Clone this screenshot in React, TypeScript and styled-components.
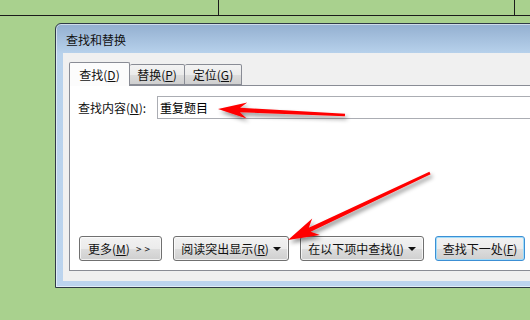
import styled, { createGlobalStyle } from "styled-components";

const GlobalStyle = createGlobalStyle`
  html, body {
    margin: 0;
    padding: 0;
    width: 530px;
    height: 320px;
    overflow: hidden;
    background: #a9d18e;
  }
  body {
    font-family: "Noto Sans CJK SC", "Noto Sans", sans-serif;
    font-size: 12px;
    color: #111;
  }
`;

type Pt = [number, number];

// arrow polygon, tail -> tip
const arrowPoints = (tail: Pt, tip: Pt, headLen: number, headW: number) => {
  const dx = tip[0] - tail[0];
  const dy = tip[1] - tail[1];
  const len = Math.hypot(dx, dy);
  const ux = dx / len;
  const uy = dy / len;
  const nx = -uy;
  const ny = ux;
  const at = (d: number, w: number): string =>
    `${(tip[0] - ux * d + nx * w).toFixed(1)},${(tip[1] - uy * d + ny * w).toFixed(1)}`;
  return [
    at(0, 0),
    at(headLen, headW),
    at(headLen - 7, 2.2),
    at(len, 1.3),
    at(len, -1.3),
    at(headLen - 7, -2.2),
    at(headLen, -headW),
  ].join(" ");
};

export default function App() {
  return (
    <>
      <GlobalStyle />
      <Page>
        <Sheet>
          <Cell $w={218} />
          <Cell $w={295} />
          <Cell $w={17} $last />
        </Sheet>
        <Dialog>
          <TitleBar>查找和替换</TitleBar>
          <Client>
            <TabRow>
              <Tab $active $w={61}>
                查找(<Key>D</Key>)
              </Tab>
              <Tab $w={55}>
                替换(<Key>P</Key>)
              </Tab>
              <Tab $w={57}>
                定位(<Key>G</Key>)
              </Tab>
            </TabRow>
            <Panel>
              <FieldRow>
                <Label>
                  查找内容(<Key>N</Key>):
                </Label>
                <Input>重复题目</Input>
              </FieldRow>
              <ButtonRow>
                <Button $w={83}>
                  更多(<Key>M</Key>) <Chevrons>&gt;&gt;</Chevrons>
                </Button>
                <Button $w={116}>
                  阅读突出显示(<Key>R</Key>)<Caret />
                </Button>
                <Button $w={124}>
                  在以下项中查找(<Key>I</Key>)<Caret />
                </Button>
                <Button $w={90} $focus>
                  查找下一处(<Key>F</Key>)
                </Button>
              </ButtonRow>
            </Panel>
          </Client>
        </Dialog>
        <Overlay viewBox="0 0 530 320" width={530} height={320}>
          <defs>
            <filter id="shadow" x="-20%" y="-50%" width="140%" height="200%">
              <feDropShadow dx="2" dy="3" stdDeviation="2" floodColor="#000" floodOpacity="0.45" />
            </filter>
          </defs>
          <polygon
            points={arrowPoints([345, 115], [218, 109], 29, 8)}
            fill="#ff0000"
            filter="url(#shadow)"
          />
          <polygon
            points={arrowPoints([430, 173], [288, 240], 31, 9)}
            fill="#ff0000"
            filter="url(#shadow)"
          />
        </Overlay>
      </Page>
    </>
  );
}

//>>>>StyledComponents<<<<\\

const Page = styled.div`
  position: relative;
  width: 530px;
  height: 320px;
  overflow: hidden;
`;

const Sheet = styled.div`
  display: flex;
  height: 15px;
  border-bottom: 1px solid #1b1b1b;
`;

const Cell = styled.div<{ $w: number; $last?: boolean }>`
  flex: none;
  width: ${(p) => p.$w}px;
  border-right: ${(p) => (p.$last ? "none" : "1px solid #1b1b1b")};
`;

const Dialog = styled.div`
  width: 500px;
  margin: 7px 0 0 55px;
  border: 1px solid #2f3a47;
  border-radius: 6px 6px 0 0;
  background: linear-gradient(#93afd0 0px, #b8d2ec 30px, #bcd4ee 100%);
  box-shadow: inset 0 0 0 1px rgba(255, 255, 255, 0.55);
  padding: 0 7px 6px 7px;
`;

const TitleBar = styled.div`
  height: 26px;
  padding-top: 3px;
  line-height: 26px;
  padding-left: 3px;
  font-size: 12px;
  color: #111;
`;

const Client = styled.div`
  background: #f0f0f0;
  padding: 9px 0 10px 6px;
  height: 209px;
`;

const TabRow = styled.div`
  display: flex;
  align-items: flex-end;
  height: 24px;
  position: relative;
  z-index: 1;
`;

const Tab = styled.div<{ $active?: boolean; $w: number }>`
  box-sizing: border-box;
  width: ${(p) => p.$w}px;
  height: ${(p) => (p.$active ? 24 : 21)}px;
  margin-bottom: ${(p) => (p.$active ? 0 : 1)}px;
  border: 1px solid #898c95;
  border-bottom: ${(p) => (p.$active ? "none" : "1px solid #898c95")};
  border-left: ${(p) => (p.$active ? "1px solid #898c95" : "none")};
  border-radius: 2px 2px 0 0;
  background: ${(p) =>
    p.$active ? "#fcfcfc" : "linear-gradient(#f3f3f3 0%, #ebebeb 50%, #dddddd 51%, #cfcfcf 100%)"};
  display: flex;
  align-items: center;
  justify-content: center;
  font-size: 12px;
  line-height: 14px;
  padding-top: ${(p) => (p.$active ? 0 : 1)}px;
`;

const Key = styled.span`
  text-decoration: underline;
  text-underline-offset: 1px;
`;

const Panel = styled.div`
  box-sizing: border-box;
  height: 186px;
  margin-top: -1px;
  border: 1px solid #898c95;
  background: #ffffff;
  display: flex;
  flex-direction: column;
  justify-content: space-between;
  padding: 10px 0 9px 8px;
`;

const FieldRow = styled.div`
  display: flex;
  align-items: center;
`;

const Label = styled.div`
  width: 79px;
  font-size: 12px;
`;

const Input = styled.div`
  box-sizing: border-box;
  flex: 1;
  height: 23px;
  border: 1px solid #abadb3;
  border-right: none;
  padding-left: 2px;
  display: flex;
  align-items: center;
  font-size: 12px;
  color: #000;
`;

const ButtonRow = styled.div`
  display: flex;
  gap: 11px;
  padding-left: 1px;
`;

const Button = styled.div<{ $w: number; $focus?: boolean }>`
  box-sizing: border-box;
  width: ${(p) => p.$w}px;
  height: 25px;
  border: 1px solid ${(p) => (p.$focus ? "#3c8fd4" : "#707070")};
  border-radius: 3px;
  background: linear-gradient(#f2f2f2 0%, #ebebeb 50%, #dddddd 51%, #cfcfcf 100%);
  box-shadow: inset 0 0 0 1px ${(p) => (p.$focus ? "#9fdcfa" : "rgba(255,255,255,0.7)")};
  display: flex;
  align-items: center;
  justify-content: center;
  font-size: 12px;
  color: #111;
  white-space: nowrap;
`;

const Chevrons = styled.span`
  margin-left: 6px;
  font-size: 10px;
  letter-spacing: 3px;
`;

const Caret = styled.span`
  display: inline-block;
  margin-left: 4px;
  width: 0;
  height: 0;
  border-left: 4px solid transparent;
  border-right: 4px solid transparent;
  border-top: 4px solid #111;
`;

const Overlay = styled.svg`
  position: absolute;
  left: 0;
  top: 0;
  pointer-events: none;
`;
